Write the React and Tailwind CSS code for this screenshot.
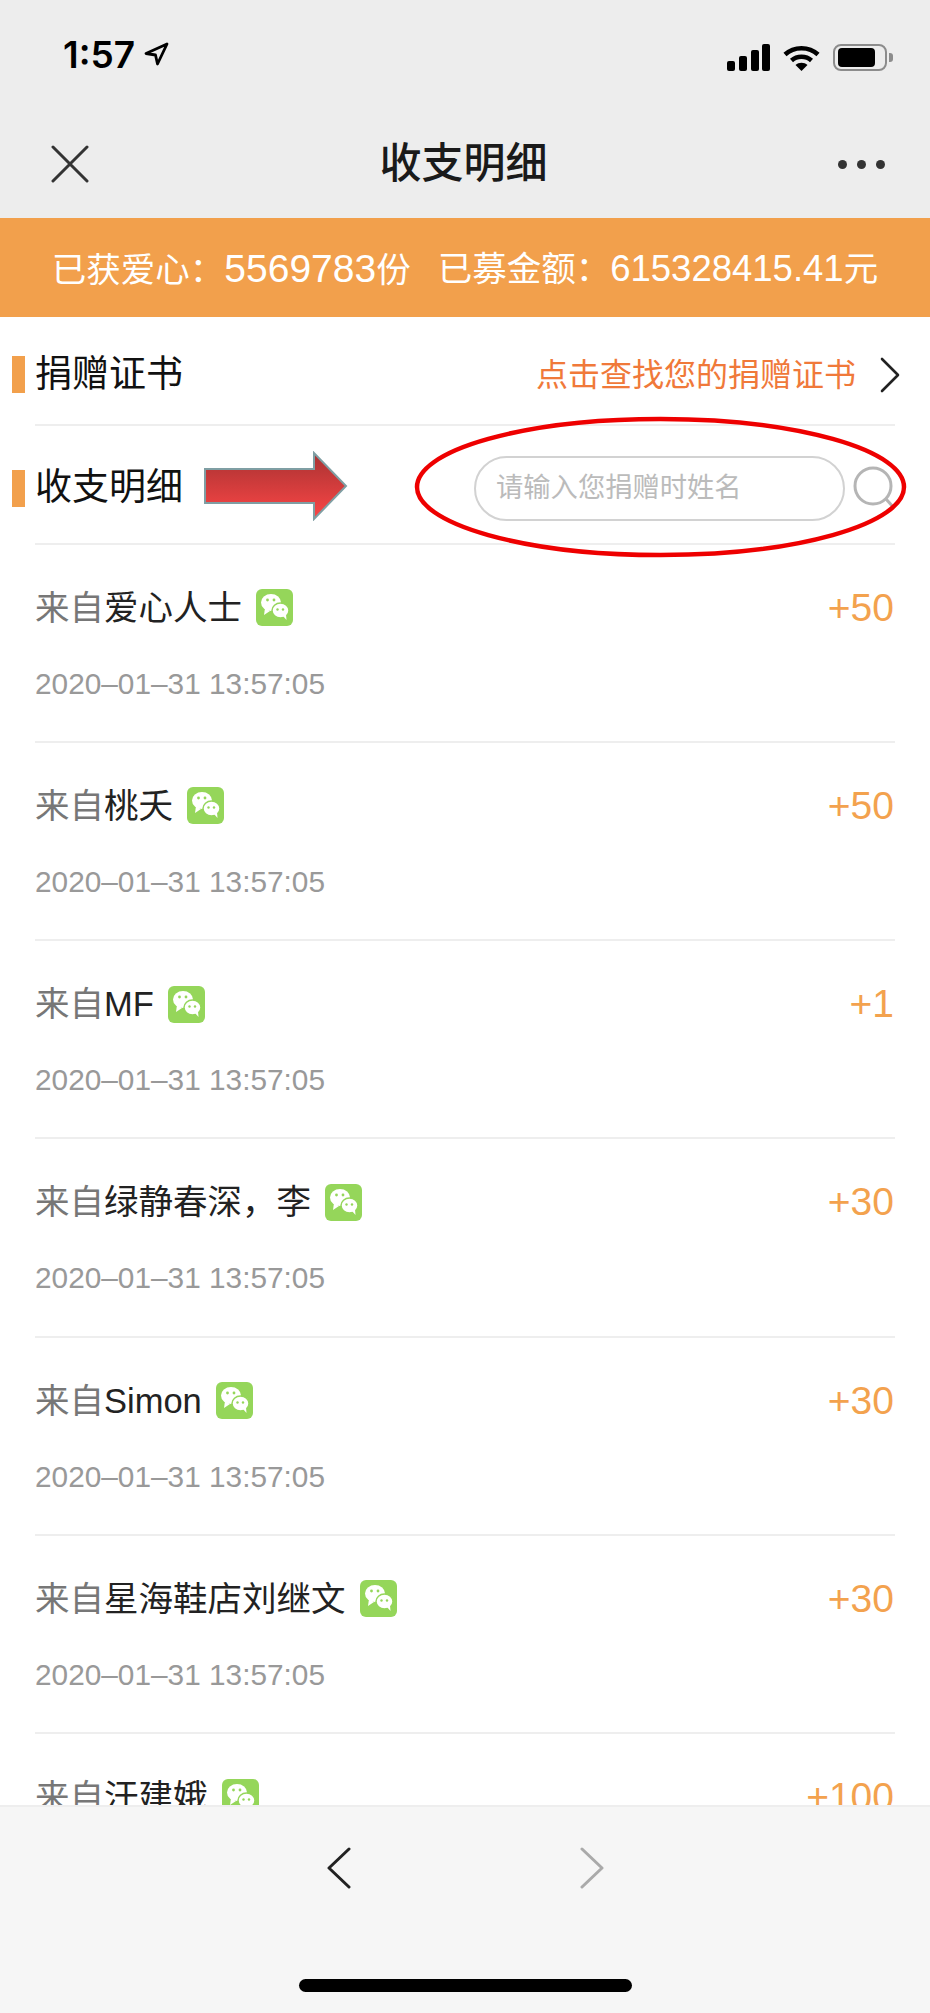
const rows = [
  { name: '爱心人士', amount: '+50' },
  { name: '桃夭', amount: '+50' },
  { name: 'MF', amount: '+1' },
  { name: '绿静春深，李', amount: '+30' },
  { name: 'Simon', amount: '+30' },
  { name: '星海鞋店刘继文', amount: '+30' },
  { name: '汗建娥', amount: '+100' },
];

const sans = 'font-["Liberation_Sans","Noto_Sans_CJK_SC",sans-serif]';

function WechatBadge() {
  return (
    <span className="flex h-[37px] w-[37px] shrink-0 items-center justify-center rounded-[6px] bg-[#95d65a]">
      <svg viewBox="0 0 37 37" className="h-[37px] w-[37px]">
        <ellipse cx="15" cy="13.500" rx="10" ry="8.500" fill="#fff" />
        <path d="M9 19 8 26l6-4z" fill="#fff" />
        <ellipse cx="24.500" cy="21.500" rx="8.500" ry="7.500" fill="#fff" stroke="#95d65a" strokeWidth="1.500" />
        <path d="M27 27l3.500 4-.5-5.500z" fill="#fff" />
        <circle cx="11.500" cy="11" r="1.400" fill="#95d65a" />
        <circle cx="18" cy="11" r="1.400" fill="#95d65a" />
        <circle cx="21.500" cy="20.500" r="1.200" fill="#95d65a" />
        <circle cx="27" cy="20.500" r="1.200" fill="#95d65a" />
      </svg>
    </span>
  );
}

function StatusBar() {
  return (
    <div className="flex h-[87px] items-end justify-between pl-[63px] pr-[37px] pb-[16px]">
      <div className="flex items-center gap-[9px]">
        <span className="pt-[2px] font-['Inter',sans-serif] text-[37px] leading-[32px] font-semibold text-black">1:57</span>
        <svg viewBox="0 0 25 24" className="h-[24px] w-[25px]" fill="none" stroke="#000" strokeWidth="2.800" strokeLinejoin="round">
          <path d="M23 2 2 11.500l9.500 1.500 2 9z" />
        </svg>
      </div>
      <div className="flex items-center gap-[13px]">
        <svg viewBox="0 0 43 27" className="h-[27px] w-[43px]" fill="#000">
          <rect x="0" y="17" width="8" height="10" rx="2" />
          <rect x="12" y="12" width="8" height="15" rx="2" />
          <rect x="24" y="6" width="8" height="21" rx="2" />
          <rect x="35" y="0" width="8" height="27" rx="2" />
        </svg>
        <svg viewBox="0 0 37 27" className="h-[27px] w-[37px]" fill="none" stroke="#000" strokeWidth="4.500">
          <path d="M2 10.500C11 2 26 2 35 10.500" />
          <path d="M8.500 16.500c5.500-5 14.500-5 20 0" />
          <path d="M18.500 27l-6-6c3.400-3 8.600-3 12 0z" fill="#000" stroke="none" />
        </svg>
        <div className="flex items-center gap-[2px]">
          <div className="flex h-[27px] w-[54px] items-center rounded-[8px] border-2 border-[#8c8c8c] pl-[3px]">
            <div className="h-[19px] w-[37px] rounded-[4px] bg-black" />
          </div>
          <div className="h-[9px] w-[4px] rounded-r-[3px] bg-[#8c8c8c]" />
        </div>
      </div>
    </div>
  );
}

function NavBar() {
  return (
    <div className="flex h-[131px] items-start justify-between pt-[47px] pl-[51px] pr-[45px]">
      <svg viewBox="0 0 38 38" className="mt-[11px] h-[38px] w-[38px]" stroke="#333" strokeWidth="3" strokeLinecap="round">
        <path d="M2 2 36 36M36 2 2 36" />
      </svg>
      <div className={`${sans} text-[42px] leading-[60px] font-medium text-[#1a1a1a]`}>收支明细</div>
      <div className="mt-[26px] flex gap-[10px]">
        <span className="h-[9px] w-[9px] rounded-full bg-[#333]" />
        <span className="h-[9px] w-[9px] rounded-full bg-[#333]" />
        <span className="h-[9px] w-[9px] rounded-full bg-[#333]" />
      </div>
    </div>
  );
}

function Row({ name, amount }) {
  return (
    <div className="mx-[35px] h-[198.300px] shrink-0 border-b-[2.500px] border-[#eeeeee] pt-[43px]">
      <div className="flex items-center justify-between">
        <div className="flex items-center gap-[14px]">
          <div className="text-[34.500px] leading-[40px] text-[#222]">
            <span className="text-[#777]">来自</span>{name}
          </div>
          <WechatBadge />
        </div>
        <div className="pr-[1px] text-[39px] leading-[40px] text-[#f3a24e]">{amount}</div>
      </div>
      <div className="mt-[36px] text-[29.800px] leading-[40px] text-[#999]">2020–01–31 13:57:05</div>
    </div>
  );
}

export default function App() {
  return (
    <div className={`${sans} flex h-[2013px] w-[930px] flex-col overflow-hidden bg-white`}>
      <div className="bg-[#ededed]">
        <StatusBar />
        <NavBar />
      </div>
      <div className="flex h-[99px] items-center justify-center gap-[27px] bg-[#f2a04c] pt-[3px] text-[34.500px] text-[#fff]">
        <span>已获爱心：<span className="text-[39px]">5569783</span>份</span>
        <span>已募金额：<span className="text-[36.500px]">615328415.41</span>元</span>
      </div>

      <div className="relative">
        <div className="mx-[35px] flex h-[109px] items-center justify-between border-b-[2.500px] border-[#eeeeee] pt-[8px]">
          <div className="relative flex items-center text-[37px] leading-[50px] whitespace-nowrap text-[#111]">
            <span className="absolute left-[-23px] h-[37px] w-[13px] bg-[#f2a04c]" />
            捐赠证书
          </div>
          <div className="flex items-center gap-[24px]">
            <span className="text-[32px] text-[#f0793a]">点击查找您的捐赠证书</span>
            <svg viewBox="0 0 20 36" className="mr-[-5px] h-[36px] w-[20px]" fill="none" stroke="#222" strokeWidth="2.600" strokeLinecap="round" strokeLinejoin="round">
              <path d="M2 2 18 18 2 34" />
            </svg>
          </div>
        </div>
        <div className="mx-[35px] flex h-[118.500px] items-center border-b-[2.500px] border-[#eeeeee] pt-[8px]">
          <div className="relative flex shrink-0 items-center text-[37px] leading-[50px] whitespace-nowrap text-[#111]">
            <span className="absolute left-[-23px] h-[37px] w-[13px] bg-[#f2a04c]" />
            收支明细
          </div>
          <svg viewBox="0 0 144 70" className="mt-[-4px] ml-[21px] h-[70px] w-[144px] shrink-0">
            <defs>
              <linearGradient id="arrowFill" x1="0" y1="0" x2="0" y2="1">
                <stop offset="0" stopColor="#a83232" />
                <stop offset="1" stopColor="#fb4646" />
              </linearGradient>
            </defs>
            <path d="M1 18H110V2L142 35 110 68V52H1z" fill="url(#arrowFill)" stroke="#7f9ea3" strokeWidth="2" />
          </svg>
          <div className="ml-[126px] flex h-[65px] w-[371px] shrink-0 items-center rounded-full border-2 border-[#d2d2d2] pl-[20px] text-[27.300px] text-[#bbb]">
            请输入您捐赠时姓名
          </div>
          <svg viewBox="0 0 42 44" className="ml-[8px] h-[44px] w-[42px] shrink-0" fill="none" stroke="#b5b5b5" strokeWidth="3">
            <circle cx="20" cy="20" r="18" />
            <path d="M33 33 41 42" />
          </svg>
        </div>
        {/* red marker drawn over the search box */}
        <svg viewBox="0 0 493 142" className="absolute left-[414px] top-[99px] h-[142px] w-[493px]" fill="none" stroke="#ee0000" strokeWidth="4.500">
          <ellipse cx="246.500" cy="71" rx="243.500" ry="68" />
        </svg>
      </div>

      <div className="flex min-h-0 flex-1 flex-col overflow-hidden">
        {rows.map((row) => (
          <Row key={row.name} name={row.name} amount={row.amount} />
        ))}
      </div>

      <div className="flex h-[208px] shrink-0 flex-col items-center border-t-2 border-[#eeeeee] bg-[#f6f6f6]">
        <div className="mt-[40px] flex gap-[229px]">
          <svg viewBox="0 0 24 42" className="h-[42px] w-[24px]" fill="none" stroke="#222" strokeWidth="3" strokeLinecap="round" strokeLinejoin="round">
            <path d="M22 2 2 21 22 40" />
          </svg>
          <svg viewBox="0 0 24 42" className="h-[42px] w-[24px]" fill="none" stroke="#aaa" strokeWidth="3" strokeLinecap="round" strokeLinejoin="round">
            <path d="M2 2 22 21 2 40" />
          </svg>
        </div>
        <div className="mt-[90px] h-[13px] w-[333px] rounded-full bg-black" />
      </div>
    </div>
  );
}
